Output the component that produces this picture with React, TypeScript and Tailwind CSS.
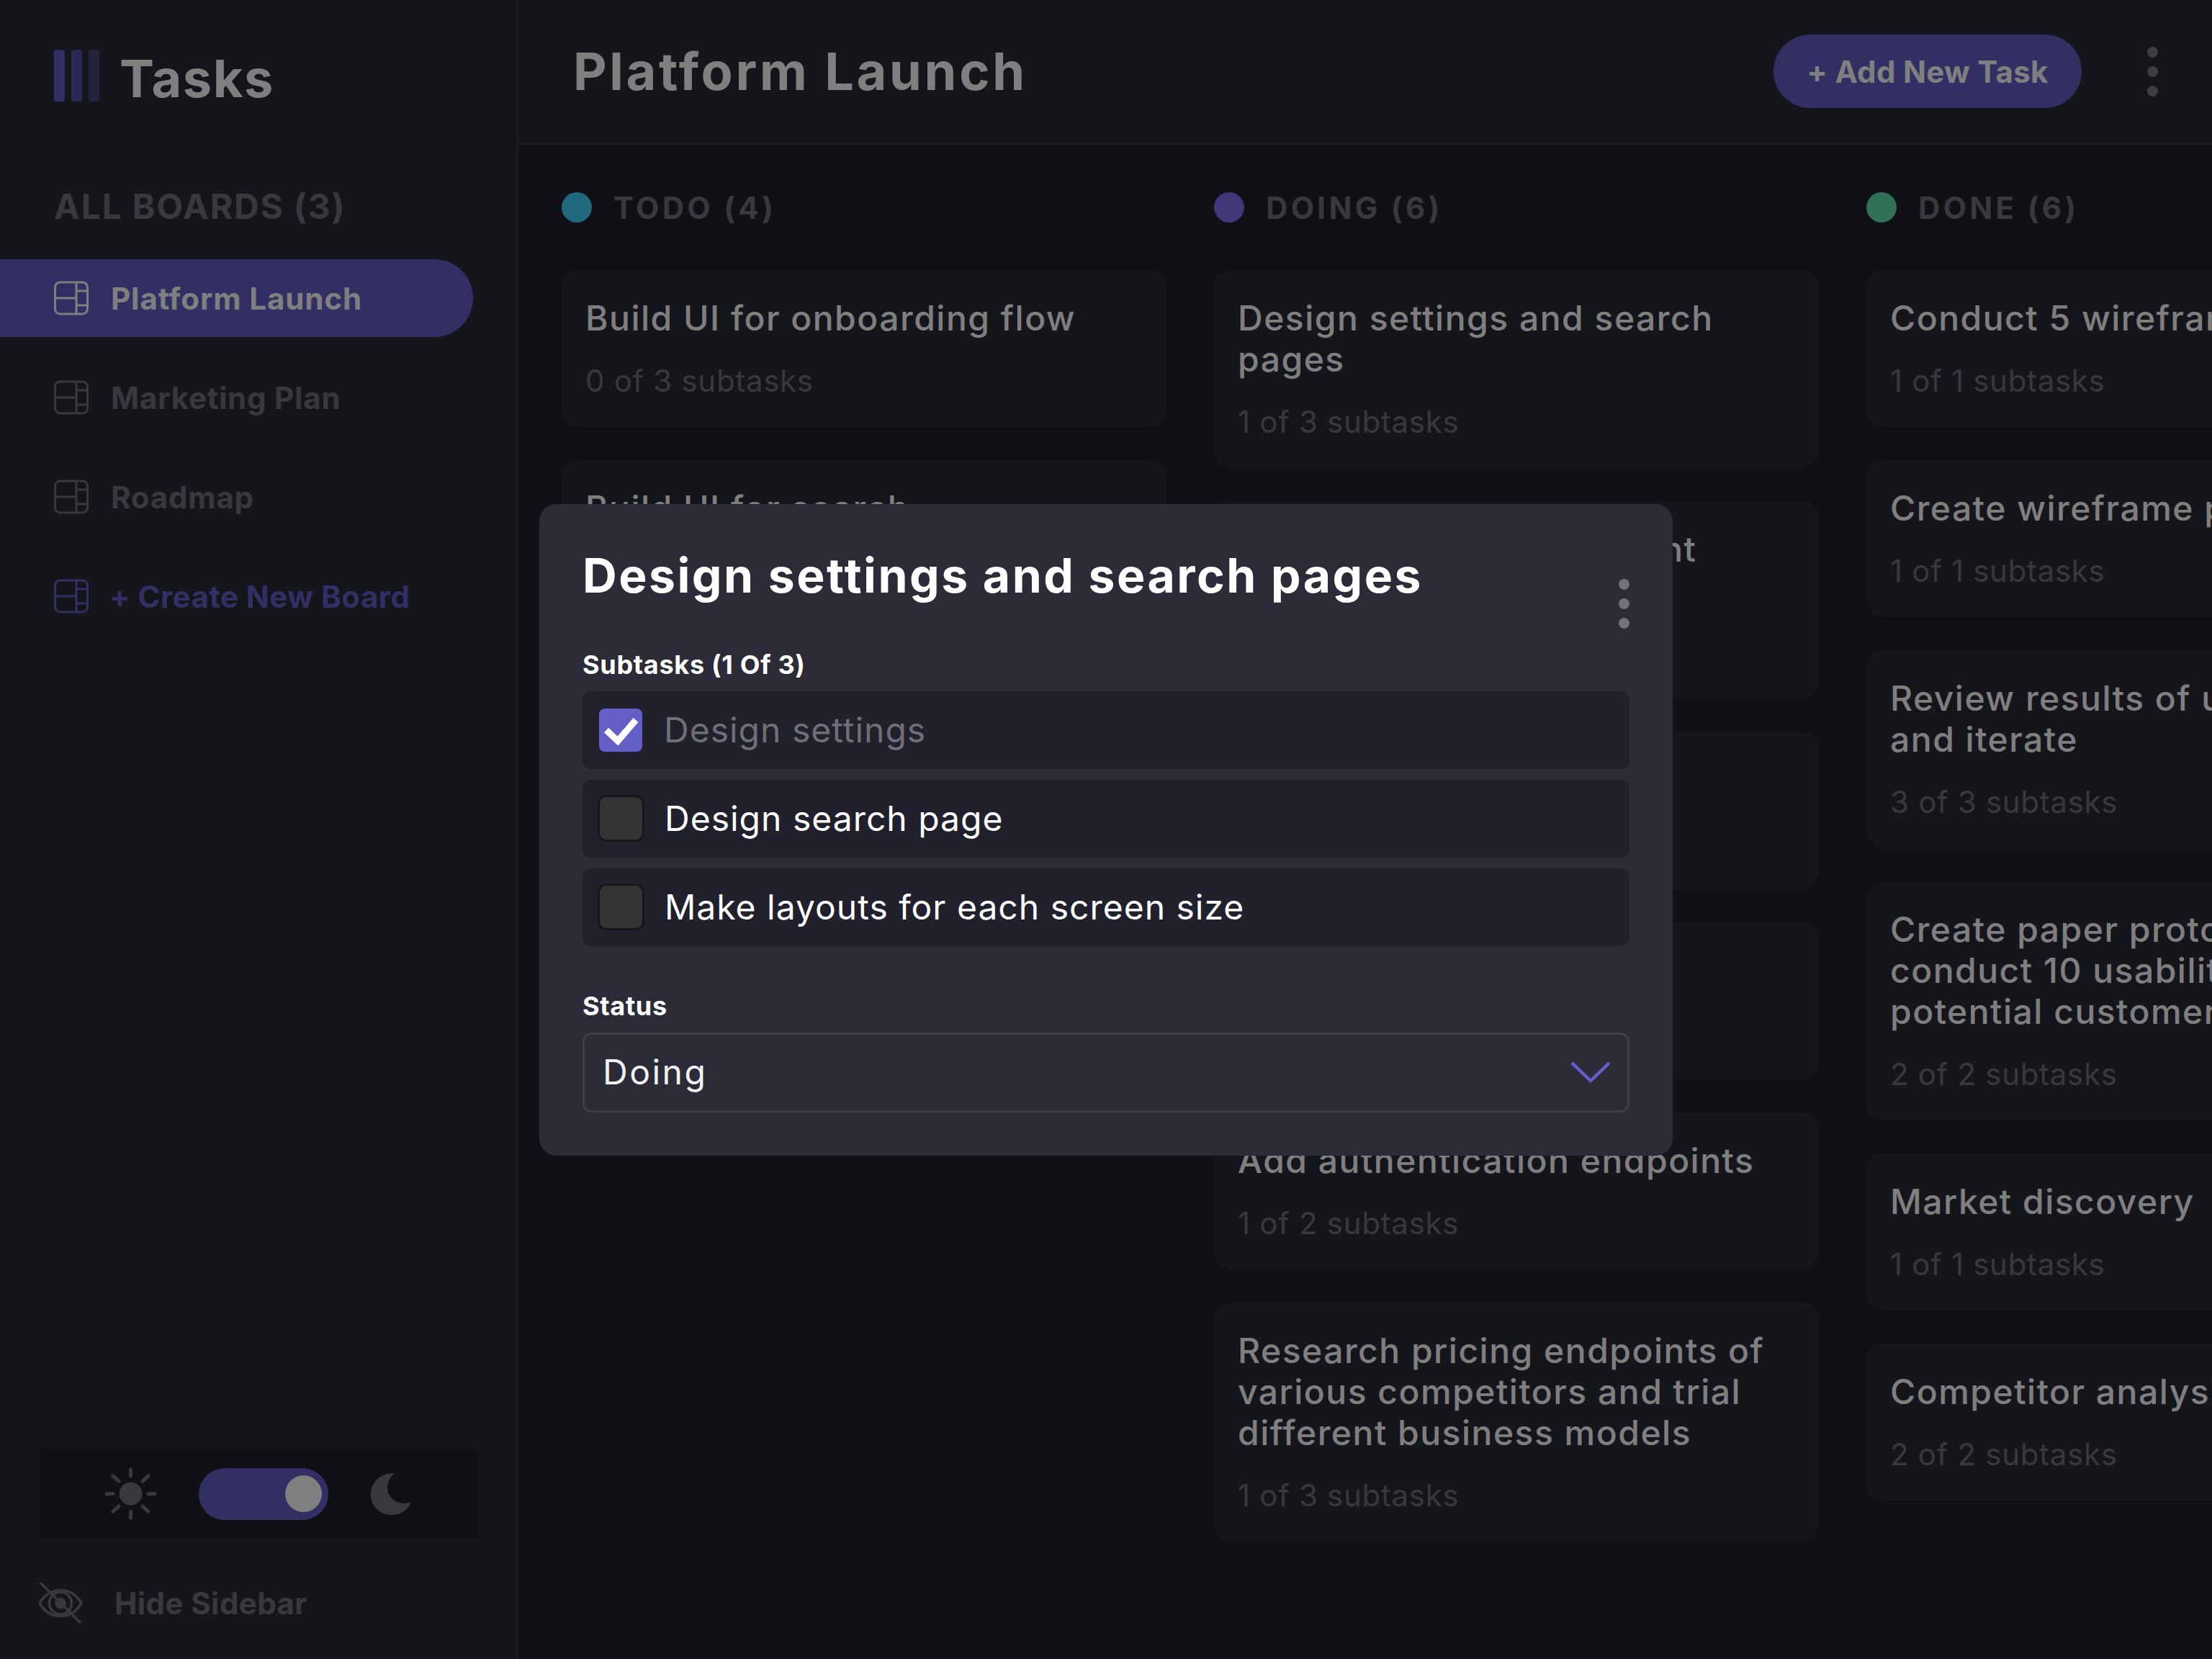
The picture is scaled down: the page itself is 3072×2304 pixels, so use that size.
import React from 'react'

const todo = [
  { title: 'Build UI for onboarding flow', sub: '0 of 3 subtasks' },
  { title: 'Build UI for search', sub: '0 of 1 subtasks' },
  { title: 'Build settings UI', sub: '0 of 2 subtasks' },
  { title: 'QA and test all major user journeys', sub: '0 of 2 subtasks' },
]

const doing = [
  { title: 'Design settings and search pages', sub: '1 of 3 subtasks' },
  { title: 'Add account management endpoints', sub: '2 of 3 subtasks' },
  { title: 'Design onboarding flow', sub: '1 of 3 subtasks' },
  { title: 'Add search endpoints', sub: '1 of 2 subtasks' },
  { title: 'Add authentication endpoints', sub: '1 of 2 subtasks' },
  { title: 'Research pricing endpoints of various competitors and trial different business models', sub: '1 of 3 subtasks' },
]

const done = [
  { title: 'Conduct 5 wireframe tests', sub: '1 of 1 subtasks' },
  { title: 'Create wireframe prototype', sub: '1 of 1 subtasks' },
  { title: 'Review results of usability tests and iterate', sub: '3 of 3 subtasks' },
  { title: 'Create paper prototypes and conduct 10 usability tests with potential customers', sub: '2 of 2 subtasks' },
  { title: 'Market discovery', sub: '1 of 1 subtasks' },
  { title: 'Competitor analysis', sub: '2 of 2 subtasks' },
]

function BoardIcon() {
  return (
    <svg viewBox="0 0 48 48" fill="none" stroke="currentColor" strokeWidth="3" className="w-[48px] h-[48px] shrink-0">
      <rect x="1.5" y="2" width="45" height="44" rx="7" />
      <path d="M31 2v44M1.5 24H31M31 14h15.5M31 34h15.5" />
    </svg>
  )
}

function Dots({ className }: { className: string }) {
  return (
    <div className="flex flex-col gap-[12px]">
      <span className={`block w-[15px] h-[15px] rounded-full ${className}`} />
      <span className={`block w-[15px] h-[15px] rounded-full ${className}`} />
      <span className={`block w-[15px] h-[15px] rounded-full ${className}`} />
    </div>
  )
}

function Column({ name, dot, cards }: { name: string; dot: string; cards: { title: string; sub: string }[] }) {
  return (
    <section className="w-[840px] shrink-0">
      <div className="flex items-center gap-[30px] h-[42px]">
        <span className={`block w-[42px] h-[42px] rounded-full ${dot}`} />
        <h2 className="text-[42px] font-bold tracking-[4.3px] text-[#70707a]">{name}</h2>
      </div>
      <div className="flex flex-col gap-[46px] mt-[66px]">
        {cards.map((c) => (
          <div key={c.title} className="bg-[#2b2c37] rounded-[24px] pl-[33px] pr-[10px] pt-[38px] pb-[39px]">
            <p className="text-[48px] leading-[57px] font-medium text-white tracking-[1.5px]">{c.title}</p>
            <p className="text-[42px] leading-[50px] mt-[34px] text-[#70707a] tracking-[0.7px]">{c.sub}</p>
          </div>
        ))}
      </div>
    </section>
  )
}

function Subtask({ label, checked }: { label: string; checked?: boolean }) {
  return (
    <div className="flex items-center h-[108px] rounded-[12px] bg-[#20212c] pl-[21px]">
      {checked ? (
        <span className="flex items-center justify-center w-[60px] h-[60px] mx-[2px] rounded-[8px] bg-[#635fc7]">
          <svg viewBox="0 0 60 60" className="w-[60px] h-[60px]" fill="none" stroke="#fff" strokeWidth="9">
            <path d="M10 30l16 15L51 16" />
          </svg>
        </span>
      ) : (
        <span className="block w-[65px] h-[65px] rounded-[12px] bg-[#333333] border-[3px] border-[#16161b]" />
      )}
      <span className={`ml-[28px] text-[48px] tracking-[1px] ${checked ? 'text-[#6e6f78]' : 'text-white'}`}>{label}</span>
    </div>
  )
}

export default function App() {
  return (
    <div className="relative flex w-screen h-screen overflow-hidden bg-[#20212c] font-[Inter,sans-serif]">
      <aside className="w-[720px] shrink-0 flex flex-col bg-[#2b2c37] border-r-[3px] border-[#393a45] pb-[46px]">
        <div className="flex items-center h-[210px] pl-[75px]">
          <div className="flex gap-[9px] h-[72px]">
            <span className="block w-[15px] rounded-[4px] bg-[#635fc7]" />
            <span className="block w-[15px] rounded-[4px] bg-[#635fc7]/75" />
            <span className="block w-[15px] rounded-[4px] bg-[#635fc7]/50" />
          </div>
          <span className="ml-[28px] mt-[8px] text-[72px] font-bold text-white leading-none tracking-[1.6px]">Tasks</span>
        </div>
        <h2 className="mt-[48px] pl-[75px] text-[48px] font-bold leading-[58px] text-[#70707a] tracking-[1.8px]">ALL BOARDS (3)</h2>
        <nav className="flex flex-col gap-[30px] mt-[44px]">
          <a className="flex items-center h-[108px] w-[657px] pl-[75px] rounded-r-full bg-[#635fc7] text-white">
            <BoardIcon />
            <span className="ml-[31px] text-[42px] font-bold tracking-[0.9px]">Platform Launch</span>
          </a>
          <a className="flex items-center h-[108px] pl-[75px] text-[#70707a]">
            <BoardIcon />
            <span className="ml-[31px] text-[42px] font-bold tracking-[0.8px]">Marketing Plan</span>
          </a>
          <a className="flex items-center h-[108px] pl-[75px] text-[#70707a]">
            <BoardIcon />
            <span className="ml-[31px] text-[42px] font-bold tracking-[0.8px]">Roadmap</span>
          </a>
          <a className="flex items-center h-[108px] pl-[75px] text-[#635fc7]">
            <BoardIcon />
            <span className="ml-[29px] text-[42px] font-bold tracking-[0.5px]">+ Create New Board</span>
          </a>
        </nav>
        <div className="mt-auto ml-[55px] h-[123px] w-[608px] flex items-center bg-[#20212c] pl-[90px]">
          <svg viewBox="0 0 73 73" className="w-[73px] h-[73px] text-[#70707a]" fill="none" stroke="currentColor" strokeWidth="5" strokeLinecap="round">
            <circle cx="36.5" cy="36.5" r="16" fill="currentColor" stroke="none" />
            <path d="M36.5 3v9M36.5 61v9M3 36.5h9M61 36.5h9M12 12l8 7M61 12l-8 7M12 61l8-7M61 61l-8-7" />
          </svg>
          <div className="ml-[58px] flex items-center justify-end w-[180px] h-[72px] rounded-full bg-[#635fc7] pr-[9px]">
            <span className="block w-[51px] h-[51px] rounded-full bg-white" />
          </div>
          <svg viewBox="0 0 60 60" className="ml-[59px] w-[60px] h-[60px] text-[#70707a]" fill="currentColor">
            <path d="M33 1C14 0 0 13 0 31C0 47 13 59 29 59C41 59 52 52 56 41C52 43 46 43 40 42C30 39 23 31 23 21C23 13 27 6 33 1z" />
          </svg>
        </div>
        <div className="flex items-center mt-[59px] pl-[53px] text-[#70707a]">
          <svg viewBox="0 0 62 60" className="w-[62px] h-[60px]" fill="none" stroke="currentColor" strokeWidth="3.5">
            <path d="M2 29.5C10 16 20 11.5 31 11.5s21 4.500 29 18C52 43 42 47.500 31 47.500S10 43 2 29.500z" />
            <circle cx="31" cy="29.500" r="15.500" />
            <circle cx="31" cy="29.500" r="6" fill="currentColor" />
            <path d="M3 1l56 56" />
          </svg>
          <span className="ml-[44px] text-[42px] font-bold tracking-[0.4px]">Hide Sidebar</span>
        </div>
      </aside>

      <main className="flex-1 min-w-0 flex flex-col">
        <header className="flex items-center h-[201px] shrink-0 bg-[#2b2c37] border-b-[3px] border-[#393a45] pl-[76px] pr-[75px]">
          <h1 className="text-[72px] font-bold text-white tracking-[3.7px]">Platform Launch</h1>
          <button className="ml-auto w-[428px] h-[102px] rounded-full bg-[#635fc7] text-white text-[42px] font-bold tracking-[0.3px]">+ Add New Task</button>
          <div className="ml-[91px]">
            <Dots className="bg-[#7a7a84]" />
          </div>
        </header>
        <div className="flex gap-[66px] pl-[60px] pt-[66px]">
          <Column name="TODO (4)" dot="bg-[#45d0ff]" cards={todo} />
          <Column name="DOING (6)" dot="bg-[#8471f2]" cards={doing} />
          <Column name="DONE (6)" dot="bg-[#67e2ae]" cards={done} />
        </div>
      </main>

      <div className="absolute inset-0 bg-black/50 flex items-center justify-center">
        <div className="w-[1574px] rounded-[24px] bg-[#2b2c37] p-[60px]">
          <div className="flex items-start justify-between">
            <h2 className="text-[66px] leading-[78px] font-bold text-white tracking-[2.5px]">Design settings and search pages</h2>
            <div className="mt-[44px]">
              <Dots className="bg-[#72727e]" />
            </div>
          </div>
          <h3 className="mt-[28px] text-[36px] leading-[44px] font-bold text-white tracking-[0.7px]">Subtasks (1 Of 3)</h3>
          <div className="flex flex-col gap-[15px] mt-[15px]">
            <Subtask label="Design settings" checked />
            <Subtask label="Design search page" />
            <Subtask label="Make layouts for each screen size" />
          </div>
          <h3 className="mt-[61px] text-[36px] leading-[44px] font-bold text-white tracking-[0.7px]">Status</h3>
          <div className="flex items-center justify-between mt-[15px] h-[111px] rounded-[12px] border-[3px] border-[#3e3e46] pl-[25px] pr-[24px]">
            <span className="text-[48px] text-[#f2f2f2] tracking-[2.5px]">Doing</span>
            <svg viewBox="0 0 54 30" className="w-[54px] h-[30px]" fill="none" stroke="#635fc7" strokeWidth="4.5">
              <path d="M1 2l26 25L53 2" />
            </svg>
          </div>
        </div>
      </div>
    </div>
  )
}
